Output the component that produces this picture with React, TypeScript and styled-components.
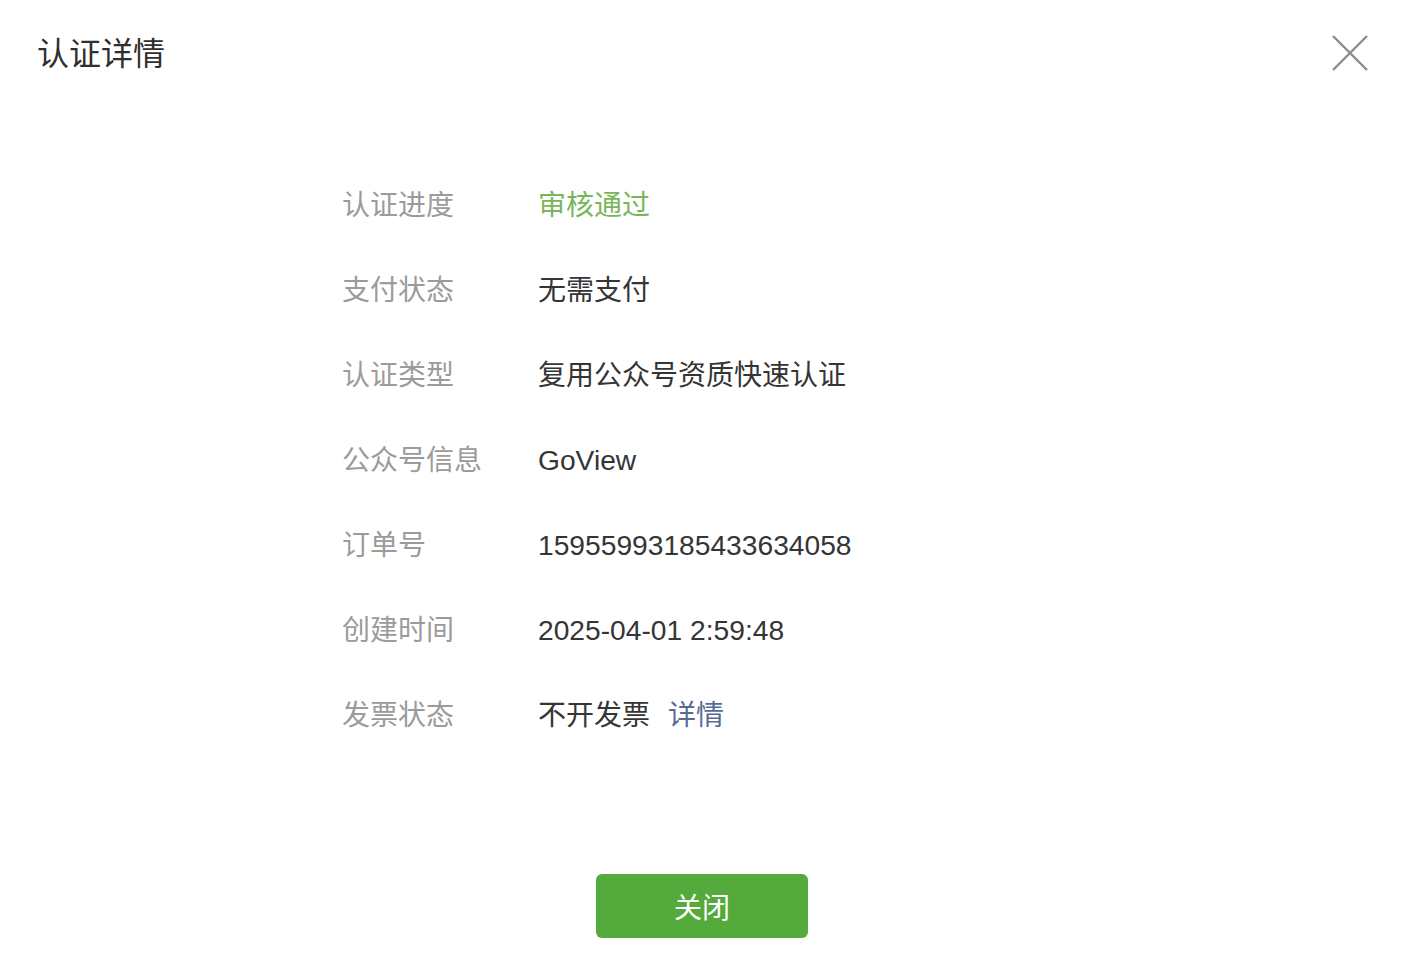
import React from "react";
import styled, { createGlobalStyle } from "styled-components";

const GlobalStyle = createGlobalStyle`
  html, body {
    margin: 0;
    padding: 0;
    background: #ffffff;
  }
  body {
    font-family: "Liberation Sans", "Noto Sans CJK SC", sans-serif;
  }
`;

const Dialog = styled.div`
  width: 1412px;
  height: 966px;
  background: #fff;
  box-sizing: border-box;
`;

const Header = styled.div`
  display: flex;
  justify-content: space-between;
  align-items: flex-start;
  padding: 29px 44px 0 37px;
  height: 74px;
  box-sizing: border-box;
`;

const Title = styled.h1`
  margin: 0;
  font-size: 32px;
  line-height: 44px;
  font-weight: 400;
  color: #2f2f2f;
  font-family: "Noto Sans CJK SC", sans-serif;
`;

const CloseButton = styled.button`
  border: 0;
  background: transparent;
  padding: 0;
  margin-top: 6px;
  width: 36px;
  height: 36px;
  cursor: pointer;
  display: flex;
`;

const InfoList = styled.div`
  display: grid;
  grid-template-columns: 196px auto;
  grid-auto-rows: 85px;
  align-items: center;
  margin: 86.5px 0 0 342px;
`;

const Label = styled.div`
  font-family: "Noto Sans CJK SC", sans-serif;
  font-size: 28px;
  color: #9b9b9b;
  line-height: 40px;
`;

const Value = styled.div<{ $tone?: "ok" | "plain"; $latin?: boolean }>`
  font-family: ${(p) =>
    p.$latin ? `"Liberation Sans", "Noto Sans CJK SC", sans-serif` : `"Noto Sans CJK SC", sans-serif`};
  font-size: ${(p) => (p.$latin ? "28.2px" : "28px")};
  padding-top: ${(p) => (p.$latin ? "4px" : "0")};
  color: ${(p) => (p.$tone === "ok" ? "#79b65b" : "#353535")};
  line-height: 40px;
  display: flex;
  gap: 18px;
`;

const Link = styled.a`
  color: #576b95;
  text-decoration: none;
  cursor: pointer;
`;

const Footer = styled.div`
  display: flex;
  justify-content: center;
  padding-right: 8px;
  margin-top: 118.5px;
`;

const PrimaryButton = styled.button`
  width: 212px;
  height: 64px;
  border: 0;
  border-radius: 6px;
  background: #54aa3b;
  color: #fff;
  font-size: 28px;
  font-family: "Noto Sans CJK SC", sans-serif;
  cursor: pointer;
`;

const rows: { label: string; value: string; latin?: boolean; ok?: boolean }[] = [
  { label: "认证进度", value: "审核通过", ok: true },
  { label: "支付状态", value: "无需支付" },
  { label: "认证类型", value: "复用公众号资质快速认证" },
  { label: "公众号信息", value: "GoView", latin: true },
  { label: "订单号", value: "15955993185433634058", latin: true },
  { label: "创建时间", value: "2025-04-01 2:59:48", latin: true },
];

export default function App() {
  return (
    <Dialog>
      <GlobalStyle />
      <Header>
        <Title>认证详情</Title>
        <CloseButton aria-label="关闭">
          <svg width="36" height="36" viewBox="0 0 36 36">
            <path d="M1 1L35 35M35 1L1 35" stroke="#8c8c8c" strokeWidth="2.4" fill="none" />
          </svg>
        </CloseButton>
      </Header>

      <InfoList>
        {rows.map((r) => (
          <React.Fragment key={r.label}>
            <Label>{r.label}</Label>
            <Value $latin={r.latin} $tone={r.ok ? "ok" : "plain"}>
              {r.value}
            </Value>
          </React.Fragment>
        ))}
        <Label>发票状态</Label>
        <Value>
          <span>不开发票</span>
          <Link>详情</Link>
        </Value>
      </InfoList>

      <Footer>
        <PrimaryButton>关闭</PrimaryButton>
      </Footer>
    </Dialog>
  );
}
